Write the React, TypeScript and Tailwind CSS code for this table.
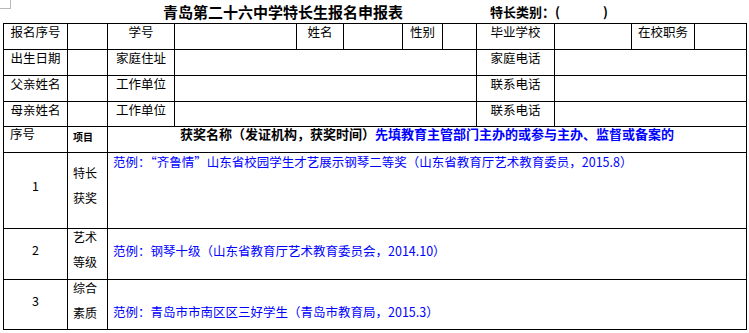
import React from 'react';

// 顶部信息栏（四行）
const infoRows: string[][] = [
  ['出生日期', '家庭住址', '家庭电话'],
  ['父亲姓名', '工作单位', '联系电话'],
  ['母亲姓名', '工作单位', '联系电话'],
];

const label = 'bg-white text-center text-[12.5px] leading-[15px] text-black';
const blank = 'bg-white';
const blue = 'text-[#0000ff]';

function App() {
  return (
    <div className="relative w-[749px] h-[333px] overflow-hidden bg-white font-['Noto_Sans_CJK_SC',sans-serif]">
      {/* 页角标记 */}
      <div className="absolute left-0 top-0 w-[11px] h-[9px] border-r border-b border-[#b8b8b8]" />

      {/* 标题 */}
      <div className="flex items-center h-[23px] pl-[163px] text-black">
        <span className="text-[15px] font-bold leading-[18px]">青岛第二十六中学特长生报名申报表</span>
        <span className="ml-[87px] text-[13px] font-bold leading-[18px]">
          特长类别：(<span className="inline-block w-[43px]" />)
        </span>
      </div>

      {/* 表格 */}
      <div className="ml-[3px] w-[744px] grid grid-cols-[63px_39px_66px_121px_46px_58px_39px_33px_77px_76px_62px_51px] grid-rows-[25px_25px_25px_24px_25px_75px_50px_49px] gap-px p-px bg-black">
        {/* 第一行 */}
        <div className={label}>报名序号</div>
        <div className={blank} />
        <div className={label}>学号</div>
        <div className={blank} />
        <div className={label}>姓名</div>
        <div className={blank} />
        <div className={label}>性别</div>
        <div className={blank} />
        <div className={label}>毕业学校</div>
        <div className={blank} />
        <div className={label}>在校职务</div>
        <div className={blank} />

        {infoRows.map((r, i) => (
          <React.Fragment key={i}>
            <div className={label}>{r[0]}</div>
            <div className={blank} />
            <div className={label}>{r[1]}</div>
            <div className={`${blank} col-span-5`} />
            <div className={label}>{r[2]}</div>
            <div className={`${blank} col-span-3`} />
          </React.Fragment>
        ))}

        {/* 获奖栏表头 */}
        <div className="bg-white pl-[6px] text-[12.5px] leading-[13px] text-black">序号</div>
        <div className="bg-white pl-[5px] pt-[3px] text-[10px] font-bold leading-[13px] text-black">项目</div>
        <div className="col-span-10 bg-white text-center text-[13px] font-bold leading-[13px] whitespace-nowrap">
          <span className="text-black">获奖名称（发证机构，获奖时间）</span>
          <span className={blue}>先填教育主管部门主办的或参与主办、监督或备案的</span>
        </div>

        {/* 1 特长获奖 */}
        <div className="flex items-center justify-center pb-[8px] bg-white text-[12.5px] text-black">1</div>
        <div className="bg-white pl-[5px] pt-[7px] text-[12px] leading-[25px] text-black">
          <div>特长</div>
          <div>获奖</div>
        </div>
        <div className={`col-span-10 bg-white pl-[5px] pt-[1px] text-[12.5px] leading-[15px] whitespace-nowrap ${blue}`}>
          范例：“齐鲁情”山东省校园学生才艺展示钢琴二等奖（山东省教育厅艺术教育委员，2015.8）
        </div>

        {/* 2 艺术等级 */}
        <div className="flex items-center justify-center pb-[8px] bg-white text-[12.5px] text-black">2</div>
        <div className="bg-white pl-[5px] text-[12px] leading-[25px] text-black">
          <div className="-mt-[5px]">艺术</div>
          <div>等级</div>
        </div>
        <div className={`col-span-10 flex items-center pb-[7px] bg-white pl-[5px] text-[12.5px] leading-[15px] whitespace-nowrap ${blue}`}>
          范例：钢琴十级（山东省教育厅艺术教育委员会，2014.10）
        </div>

        {/* 3 综合素质 */}
        <div className="flex items-center justify-center pb-[7px] bg-white text-[12.5px] text-black">3</div>
        <div className="bg-white pl-[5px] text-[12px] leading-[25px] text-black">
          <div className="-mt-[5px]">综合</div>
          <div>素质</div>
        </div>
        <div className={`col-span-10 bg-white pl-[5px] pt-[24px] text-[12.5px] leading-[15px] whitespace-nowrap ${blue}`}>
          范例：青岛市市南区区三好学生（青岛市教育局，2015.3）
        </div>
      </div>
    </div>
  );
}

export default App;
